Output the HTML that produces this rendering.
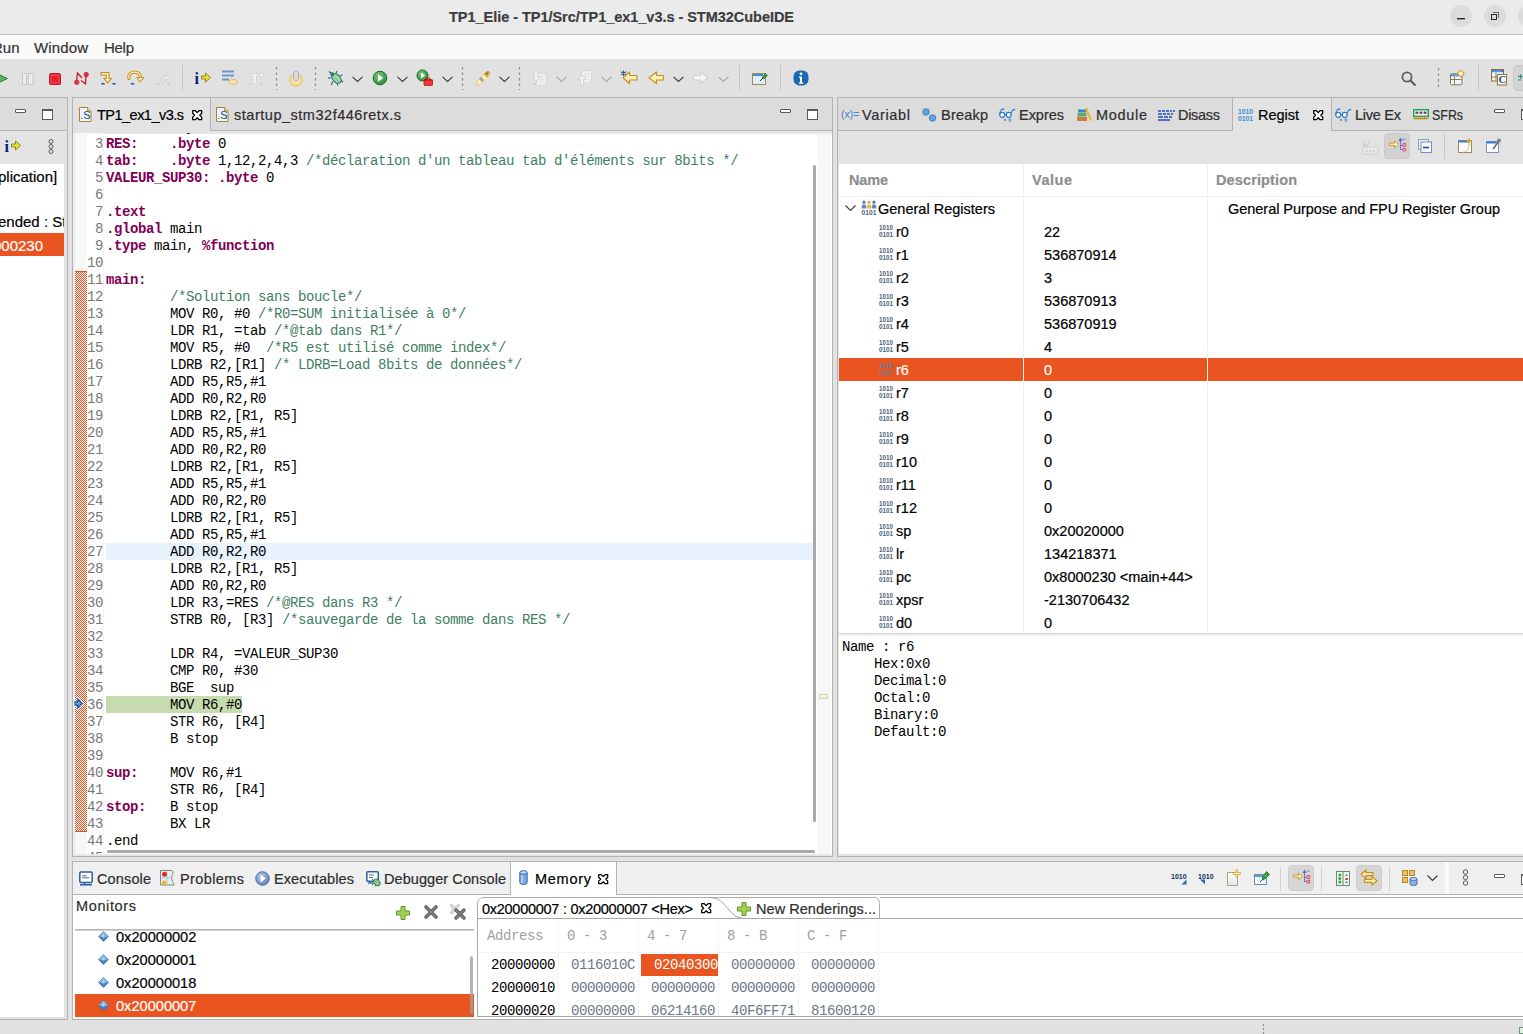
<!DOCTYPE html><html><head><meta charset="utf-8"><style>
*{margin:0;padding:0;box-sizing:border-box}
html,body{width:1523px;height:1034px;overflow:hidden;background:#e1e1e1}
body{position:relative;font-family:"Liberation Sans",sans-serif;font-size:14.5px;color:#1e1e1e}
body div{position:absolute;white-space:pre}
.t{line-height:17px;height:17px;-webkit-text-stroke:0.2px currentColor}
.m{font-family:"Liberation Mono",monospace;font-size:14px;letter-spacing:-0.4px;line-height:17px;height:17px}
.k{color:#7f0055;font-weight:bold}
.c{color:#3f7f5f}
svg{position:absolute;overflow:visible}
span{white-space:pre}
</style></head><body>
<div style="left:0px;top:0px;width:1523px;height:34px;background:#ebebeb"></div>
<div style="left:0px;top:34px;width:1523px;height:1px;background:#bdbdbd"></div>
<div class="t" style="left:449px;top:9px;font-weight:bold;color:#3d3d3d;font-size:14.5px;letter-spacing:-0.034px">TP1_Elie - TP1/Src/TP1_ex1_v3.s - STM32CubeIDE</div>
<div style="left:1450px;top:5px;width:22px;height:22px;background:#dcdcdc;border-radius:50%"></div>
<div style="left:1457px;top:18px;width:8px;height:1px;background:#1e1e1e;box-shadow:0 0.5px 0 #5a5a5a"></div>
<div style="left:1484px;top:5px;width:22px;height:22px;background:#dcdcdc;border-radius:50%"></div>
<div style="left:1491px;top:14px;width:6px;height:6px;border:1.2px solid #2a2a2a"></div>
<div style="left:1493px;top:12px;width:6px;height:6px;border-top:1px solid #6a6a6a;border-right:1px solid #6a6a6a"></div>
<div style="left:1518px;top:5px;width:22px;height:22px;background:#dcdcdc;border-radius:50%"></div>
<div style="left:0px;top:35px;width:1523px;height:24px;background:#fafafa"></div>
<div class="t" style="left:-8px;top:39px;color:#333;font-size:15px">Run</div>
<div class="t" style="left:34px;top:39px;color:#333;font-size:15px;letter-spacing:0.130px">Window</div>
<div class="t" style="left:104px;top:39px;color:#333;font-size:15px;letter-spacing:-0.283px">Help</div>
<div style="left:0px;top:59px;width:1523px;height:38px;background:#e1e1e1"></div>
<div style="left:0px;top:97px;width:68px;height:923px;border-top:1px solid #b3b3b3;border-right:1px solid #b3b3b3;border-bottom:1px solid #b3b3b3;background:#e3e3e3"></div>
<div style="left:0px;top:98px;width:67px;height:32px;background:#dcdcdc"></div>
<div style="left:0px;top:130px;width:67px;height:1px;background:#b3b3b3"></div>
<div style="left:15px;top:109px;width:11px;height:4px;border:1.5px solid #5a5a5a;background:#fff;border-radius:1px"></div><div style="left:42px;top:109px;width:11px;height:11px;border:1.5px solid #5a5a5a;border-top-width:2.5px;background:#fff"></div>
<div style="left:0px;top:164px;width:64px;height:853px;background:#fff"></div>
<div style="left:72px;top:97px;width:761px;height:760px;border:1px solid #b3b3b3;background:#e6e6e6"></div>
<div style="left:73px;top:98px;width:759px;height:32px;background:#dcdcdc"></div>
<div style="left:73px;top:98px;width:137px;height:35px;background:#e3e3e3"></div>
<div style="left:210px;top:98px;width:1px;height:33px;background:#b3b3b3"></div>
<div style="left:211px;top:130px;width:621px;height:1px;background:#b3b3b3"></div>
<div style="left:780px;top:109px;width:11px;height:4px;border:1.5px solid #5a5a5a;background:#fff;border-radius:1px"></div><div style="left:807px;top:109px;width:11px;height:11px;border:1.5px solid #5a5a5a;border-top-width:2.5px;background:#fff"></div>
<div style="left:73px;top:134px;width:759px;height:720px;background:#fff"></div>
<div style="left:73px;top:134px;width:2px;height:720px;background:#ececec"></div>
<div style="left:75px;top:133px;width:29px;height:1px;background:#f8f8f8"></div>
<div style="left:75px;top:134px;width:12px;height:720px;background:#f7f7f7"></div>
<div style="left:817px;top:134px;width:14px;height:720px;background:#f7f7f7"></div>
<div style="left:837px;top:97px;width:700px;height:760px;border:1px solid #b3b3b3;background:#e3e3e3"></div>
<div style="left:838px;top:98px;width:700px;height:32px;background:#dcdcdc"></div>
<div style="left:838px;top:130px;width:394px;height:1px;background:#b3b3b3"></div>
<div style="left:1232px;top:98px;width:1px;height:33px;background:#b3b3b3"></div>
<div style="left:1233px;top:98px;width:98px;height:33px;background:#e3e3e3"></div>
<div style="left:1331px;top:98px;width:1px;height:33px;background:#b3b3b3"></div>
<div style="left:1332px;top:130px;width:200px;height:1px;background:#b3b3b3"></div>
<div style="left:839px;top:164px;width:690px;height:690px;background:#fff"></div>
<div style="left:72px;top:861px;width:1460px;height:159px;border:1px solid #b3b3b3;background:#fff"></div>
<div style="left:73px;top:862px;width:1460px;height:32px;background:#efefef"></div>
<div style="left:73px;top:894px;width:437px;height:1px;background:#b3b3b3"></div>
<div style="left:510px;top:862px;width:1px;height:33px;background:#b3b3b3"></div>
<div style="left:511px;top:862px;width:105px;height:33px;background:#fff"></div>
<div style="left:616px;top:862px;width:1px;height:33px;background:#b3b3b3"></div>
<div style="left:617px;top:894px;width:910px;height:1px;background:#b3b3b3"></div>
<div style="left:0px;top:1020px;width:1523px;height:14px;background:#e1e1e1"></div>
<div style="left:0;top:0;width:1523px;height:1034px;clip-path:inset(133px 691px 180px 73px)"><div style="left:106px;top:543px;width:709px;height:17px;background:#e8f2fe"></div><div style="left:103px;top:134px;width:1px;height:720px;background:#f4f4f4"></div><div style="left:106px;top:696px;width:136px;height:17px;background:#c6dbae"></div><div style="left:75px;top:271px;width:12px;height:561px;background-image:repeating-conic-gradient(#e9501c 0 25%,#fff 0 50%);background-size:2px 2px;border-top:1px solid #e9501c;border-bottom:1px solid #e9501c"></div><div class="m" style="left:87px;top:119px;width:16px;text-align:right;color:#787878">2</div><div class="m" style="left:106px;top:119px;color:#000"><span class="k">SUM:</span>    <span class="k">.byte</span> 0</div><div class="m" style="left:87px;top:136px;width:16px;text-align:right;color:#787878">3</div><div class="m" style="left:106px;top:136px;color:#000"><span class="k">RES:</span>    <span class="k">.byte</span> 0</div><div class="m" style="left:87px;top:153px;width:16px;text-align:right;color:#787878">4</div><div class="m" style="left:106px;top:153px;color:#000"><span class="k">tab:</span>    <span class="k">.byte</span> 1,12,2,4,3 <span class="c">/*déclaration d'un tableau tab d'éléments sur 8bits */</span></div><div class="m" style="left:87px;top:170px;width:16px;text-align:right;color:#787878">5</div><div class="m" style="left:106px;top:170px;color:#000"><span class="k">VALEUR_SUP30:</span> <span class="k">.byte</span> 0</div><div class="m" style="left:87px;top:187px;width:16px;text-align:right;color:#787878">6</div><div class="m" style="left:87px;top:204px;width:16px;text-align:right;color:#787878">7</div><div class="m" style="left:106px;top:204px;color:#000"><span class="k">.text</span></div><div class="m" style="left:87px;top:221px;width:16px;text-align:right;color:#787878">8</div><div class="m" style="left:106px;top:221px;color:#000"><span class="k">.global</span> main</div><div class="m" style="left:87px;top:238px;width:16px;text-align:right;color:#787878">9</div><div class="m" style="left:106px;top:238px;color:#000"><span class="k">.type</span> main, <span class="k">%function</span></div><div class="m" style="left:87px;top:255px;width:16px;text-align:right;color:#787878">10</div><div class="m" style="left:87px;top:272px;width:16px;text-align:right;color:#787878">11</div><div class="m" style="left:106px;top:272px;color:#000"><span class="k">main:</span></div><div class="m" style="left:87px;top:289px;width:16px;text-align:right;color:#787878">12</div><div class="m" style="left:106px;top:289px;color:#000">        <span class="c">/*Solution sans boucle*/</span></div><div class="m" style="left:87px;top:306px;width:16px;text-align:right;color:#787878">13</div><div class="m" style="left:106px;top:306px;color:#000">        MOV R0, #0 <span class="c">/*R0=SUM initialisée à 0*/</span></div><div class="m" style="left:87px;top:323px;width:16px;text-align:right;color:#787878">14</div><div class="m" style="left:106px;top:323px;color:#000">        LDR R1, =tab <span class="c">/*@tab dans R1*/</span></div><div class="m" style="left:87px;top:340px;width:16px;text-align:right;color:#787878">15</div><div class="m" style="left:106px;top:340px;color:#000">        MOV R5, #0  <span class="c">/*R5 est utilisé comme index*/</span></div><div class="m" style="left:87px;top:357px;width:16px;text-align:right;color:#787878">16</div><div class="m" style="left:106px;top:357px;color:#000">        LDRB R2,[R1] <span class="c">/* LDRB=Load 8bits de données*/</span></div><div class="m" style="left:87px;top:374px;width:16px;text-align:right;color:#787878">17</div><div class="m" style="left:106px;top:374px;color:#000">        ADD R5,R5,#1</div><div class="m" style="left:87px;top:391px;width:16px;text-align:right;color:#787878">18</div><div class="m" style="left:106px;top:391px;color:#000">        ADD R0,R2,R0</div><div class="m" style="left:87px;top:408px;width:16px;text-align:right;color:#787878">19</div><div class="m" style="left:106px;top:408px;color:#000">        LDRB R2,[R1, R5]</div><div class="m" style="left:87px;top:425px;width:16px;text-align:right;color:#787878">20</div><div class="m" style="left:106px;top:425px;color:#000">        ADD R5,R5,#1</div><div class="m" style="left:87px;top:442px;width:16px;text-align:right;color:#787878">21</div><div class="m" style="left:106px;top:442px;color:#000">        ADD R0,R2,R0</div><div class="m" style="left:87px;top:459px;width:16px;text-align:right;color:#787878">22</div><div class="m" style="left:106px;top:459px;color:#000">        LDRB R2,[R1, R5]</div><div class="m" style="left:87px;top:476px;width:16px;text-align:right;color:#787878">23</div><div class="m" style="left:106px;top:476px;color:#000">        ADD R5,R5,#1</div><div class="m" style="left:87px;top:493px;width:16px;text-align:right;color:#787878">24</div><div class="m" style="left:106px;top:493px;color:#000">        ADD R0,R2,R0</div><div class="m" style="left:87px;top:510px;width:16px;text-align:right;color:#787878">25</div><div class="m" style="left:106px;top:510px;color:#000">        LDRB R2,[R1, R5]</div><div class="m" style="left:87px;top:527px;width:16px;text-align:right;color:#787878">26</div><div class="m" style="left:106px;top:527px;color:#000">        ADD R5,R5,#1</div><div class="m" style="left:87px;top:544px;width:16px;text-align:right;color:#787878">27</div><div class="m" style="left:106px;top:544px;color:#000">        ADD R0,R2,R0</div><div class="m" style="left:87px;top:561px;width:16px;text-align:right;color:#787878">28</div><div class="m" style="left:106px;top:561px;color:#000">        LDRB R2,[R1, R5]</div><div class="m" style="left:87px;top:578px;width:16px;text-align:right;color:#787878">29</div><div class="m" style="left:106px;top:578px;color:#000">        ADD R0,R2,R0</div><div class="m" style="left:87px;top:595px;width:16px;text-align:right;color:#787878">30</div><div class="m" style="left:106px;top:595px;color:#000">        LDR R3,=RES <span class="c">/*@RES dans R3 */</span></div><div class="m" style="left:87px;top:612px;width:16px;text-align:right;color:#787878">31</div><div class="m" style="left:106px;top:612px;color:#000">        STRB R0, [R3] <span class="c">/*sauvegarde de la somme dans RES */</span></div><div class="m" style="left:87px;top:629px;width:16px;text-align:right;color:#787878">32</div><div class="m" style="left:87px;top:646px;width:16px;text-align:right;color:#787878">33</div><div class="m" style="left:106px;top:646px;color:#000">        LDR R4, =VALEUR_SUP30</div><div class="m" style="left:87px;top:663px;width:16px;text-align:right;color:#787878">34</div><div class="m" style="left:106px;top:663px;color:#000">        CMP R0, #30</div><div class="m" style="left:87px;top:680px;width:16px;text-align:right;color:#787878">35</div><div class="m" style="left:106px;top:680px;color:#000">        BGE  sup</div><div class="m" style="left:87px;top:697px;width:16px;text-align:right;color:#787878">36</div><div class="m" style="left:106px;top:697px;color:#000">        MOV R6,#0</div><div class="m" style="left:87px;top:714px;width:16px;text-align:right;color:#787878">37</div><div class="m" style="left:106px;top:714px;color:#000">        STR R6, [R4]</div><div class="m" style="left:87px;top:731px;width:16px;text-align:right;color:#787878">38</div><div class="m" style="left:106px;top:731px;color:#000">        B stop</div><div class="m" style="left:87px;top:748px;width:16px;text-align:right;color:#787878">39</div><div class="m" style="left:87px;top:765px;width:16px;text-align:right;color:#787878">40</div><div class="m" style="left:106px;top:765px;color:#000"><span class="k">sup:</span>    MOV R6,#1</div><div class="m" style="left:87px;top:782px;width:16px;text-align:right;color:#787878">41</div><div class="m" style="left:106px;top:782px;color:#000">        STR R6, [R4]</div><div class="m" style="left:87px;top:799px;width:16px;text-align:right;color:#787878">42</div><div class="m" style="left:106px;top:799px;color:#000"><span class="k">stop:</span>   B stop</div><div class="m" style="left:87px;top:816px;width:16px;text-align:right;color:#787878">43</div><div class="m" style="left:106px;top:816px;color:#000">        BX LR</div><div class="m" style="left:87px;top:833px;width:16px;text-align:right;color:#787878">44</div><div class="m" style="left:106px;top:833px;color:#000">.end</div><div class="m" style="left:87px;top:850px;width:16px;text-align:right;color:#787878">45</div><svg style="left:75px;top:698px" width="10" height="12" viewBox="0 0 10 12"><path d="M0 3.8H2.8V1L7.2 5.5 2.8 10V7.2H0z" fill="none" stroke="#fff" stroke-width="2.2" stroke-linejoin="miter"/><path d="M0 3.8H2.8V1L7.2 5.5 2.8 10V7.2H0z" fill="#6aa0d4" stroke="#0e5498" stroke-width="1.2" stroke-linejoin="miter"/></svg></div>
<svg style="left:79px;top:107px" width="13" height="15" viewBox="0 0 13 15"><path d="M0.5 0.5h8l3.5 3.5v10.5h-11.5z" fill="#eef4fc" stroke="#a8862e" stroke-width="1"/><path d="M8.5 0.5v3.5h3.5" fill="#f0d890" stroke="#a8862e" stroke-width="0.8"/><text x="1.2" y="12.3" font-family="Liberation Sans" font-size="11" fill="#23476e">.S</text></svg>
<div class="t" style="left:97px;top:107px;color:#000;font-size:14.5px;letter-spacing:-0.518px">TP1_ex1_v3.s</div>
<svg style="left:192px;top:110px" width="12" height="12" viewBox="0 0 12 12"><path d="M0.7 0.7H3.3L5.2 2.6 7.1 0.7H9.7V3.3L7.8 5.2 9.7 7.1V9.7H7.1L5.2 7.8 3.3 9.7H0.7V7.1L2.6 5.2 0.7 3.3z" fill="#fff" stroke="#000" stroke-width="1.25" stroke-linejoin="round"/></svg>
<svg style="left:216px;top:107px" width="13" height="15" viewBox="0 0 13 15"><path d="M0.5 0.5h8l3.5 3.5v10.5h-11.5z" fill="#eef4fc" stroke="#a8862e" stroke-width="1"/><path d="M8.5 0.5v3.5h3.5" fill="#f0d890" stroke="#a8862e" stroke-width="0.8"/><text x="1.2" y="12.3" font-family="Liberation Sans" font-size="11" fill="#23476e">.S</text></svg>
<div class="t" style="left:234px;top:107px;color:#2e2e2e;font-size:14.5px;letter-spacing:0.520px">startup_stm32f446retx.s</div>
<div style="left:813px;top:165px;width:3px;height:657px;background:#a8a8a8;border-radius:2px"></div>
<div style="left:107px;top:850px;width:708px;height:3px;background:#a8a8a8;border-radius:2px"></div>
<div style="left:819px;top:694px;width:9px;height:5px;border:1px solid #c6dbae;background:#eef5e6"></div>
<svg style="left:841px;top:107px" width="18" height="14" viewBox="0 0 18 14"><text x="0" y="10.5" font-family="Liberation Sans" font-size="10.5" fill="#3d85c6">(x)=</text></svg>
<div class="t" style="left:862px;top:107px;color:#2e2e2e;font-size:14.5px;letter-spacing:0.657px">Variabl</div>
<svg style="left:922px;top:108px" width="15" height="14" viewBox="0 0 15 14"><circle cx="4" cy="4" r="3.3" fill="#5fa4dc" stroke="#3a78b0" stroke-width="0.8"/><circle cx="10.5" cy="10" r="3.3" fill="#5fa4dc" stroke="#3a78b0" stroke-width="0.8"/></svg>
<div class="t" style="left:941px;top:107px;color:#2e2e2e;font-size:14.5px;letter-spacing:0.211px">Breakp</div>
<svg style="left:999px;top:107px" width="17" height="15" viewBox="0 0 17 15"><path d="M0.8 7.5C0.6 4 2.5 1.5 5 2.2M12 7.5C12.2 4.5 13.5 2 16 2.8" fill="none" stroke="#2a7ac8" stroke-width="1.1" stroke-linecap="round"/><circle cx="3.3" cy="7.8" r="2.5" fill="#fff" stroke="#2a7ac8" stroke-width="1.2"/><circle cx="9.7" cy="7.8" r="2.5" fill="#fff" stroke="#2a7ac8" stroke-width="1.2"/><path d="M5.8 7.8H7.2" stroke="#2a7ac8" stroke-width="1"/><path d="M4.8 11.8l2 2M6.8 11.8l-2 2M9.5 12.2h2.8M9.5 14h2.8" stroke="#2a7ac8" stroke-width="0.9"/></svg>
<div class="t" style="left:1019px;top:107px;color:#2e2e2e;font-size:14.5px;letter-spacing:-0.026px">Expres</div>
<svg style="left:1077px;top:108px" width="15" height="13" viewBox="0 0 15 13"><rect x="0" y="9" width="10" height="4" fill="#d07a3a"/><rect x="0.5" y="5" width="9" height="3.5" fill="#5aab6a"/><rect x="1" y="1.5" width="8" height="3" fill="#3a88c8"/><path d="M9 0l5 12.5" stroke="#e8b830" stroke-width="2.2"/></svg>
<div class="t" style="left:1096px;top:107px;color:#2e2e2e;font-size:14.5px;letter-spacing:0.689px">Module</div>
<svg style="left:1158px;top:110px" width="17" height="11" viewBox="0 0 17 11"><path d="M0 1h3M4 1h3M8 1h3M12 1h2M15 1h2M0 4h4M5 4h3M9 4h3M13 4h2M0 7h5M6 7h4M11 7h3M0 10h12" stroke="#2a4ab8" stroke-width="1.6"/></svg>
<div class="t" style="left:1178px;top:107px;color:#2e2e2e;font-size:14.5px;letter-spacing:-0.301px">Disass</div>
<svg style="left:1238px;top:109px" width="15" height="12" viewBox="0 0 15 12"><text x="0" y="5.4" font-family="Liberation Sans" font-size="7.2" font-weight="bold" fill="#3d8fd0" textLength="15" lengthAdjust="spacingAndGlyphs">1010</text><text x="0" y="11.6" font-family="Liberation Sans" font-size="7.2" font-weight="bold" fill="#3d8fd0" textLength="15" lengthAdjust="spacingAndGlyphs">0101</text></svg>
<div class="t" style="left:1258px;top:107px;color:#000;font-size:14.5px;letter-spacing:-0.020px">Regist</div>
<svg style="left:1313px;top:110px" width="12" height="12" viewBox="0 0 12 12"><path d="M0.7 0.7H3.3L5.2 2.6 7.1 0.7H9.7V3.3L7.8 5.2 9.7 7.1V9.7H7.1L5.2 7.8 3.3 9.7H0.7V7.1L2.6 5.2 0.7 3.3z" fill="#fff" stroke="#000" stroke-width="1.25" stroke-linejoin="round"/></svg>
<svg style="left:1335px;top:107px" width="17" height="15" viewBox="0 0 17 15"><path d="M0.8 7.5C0.6 4 2.5 1.5 5 2.2M12 7.5C12.2 4.5 13.5 2 16 2.8" fill="none" stroke="#2a7ac8" stroke-width="1.1" stroke-linecap="round"/><circle cx="3.3" cy="7.8" r="2.5" fill="#fff" stroke="#2a7ac8" stroke-width="1.2"/><circle cx="9.7" cy="7.8" r="2.5" fill="#fff" stroke="#2a7ac8" stroke-width="1.2"/><path d="M5.8 7.8H7.2" stroke="#2a7ac8" stroke-width="1"/><path d="M4.8 11.8l2 2M6.8 11.8l-2 2M9.5 12.2h2.8M9.5 14h2.8" stroke="#2a7ac8" stroke-width="0.9"/></svg>
<div class="t" style="left:1355px;top:107px;color:#2e2e2e;font-size:14.5px;letter-spacing:-0.258px">Live Ex</div>
<svg style="left:1413px;top:109px" width="16" height="11" viewBox="0 0 16 11"><rect x="0.7" y="0.7" width="14.6" height="6.6" fill="#e8f4ec" stroke="#18a068" stroke-width="1.4"/><rect x="2.5" y="2.6" width="2.8" height="2.2" fill="#7a3a5a"/><rect x="6.6" y="2.6" width="2.8" height="2.2" fill="#7a3a5a"/><rect x="10.7" y="2.6" width="2.8" height="2.2" fill="#7a3a5a"/><path d="M0.5 7.5H15.5V9.2L14.5 10.3H1.5L0.5 9.2z" fill="#a88420"/><path d="M2 8.6h0.01M4.1 8.6h0.01M6.2 8.6h0.01M8.3 8.6h0.01M10.4 8.6h0.01M12.5 8.6h0.01M14.2 8.6h0.01" stroke="#fff8d0" stroke-width="1.3" stroke-linecap="round"/></svg>
<div class="t" style="left:1432px;top:107px;color:#2e2e2e;font-size:14.5px;transform:scaleX(0.857);transform-origin:0 0">SFRs</div>
<div style="left:1494px;top:109px;width:11px;height:4px;border:1.5px solid #5a5a5a;background:#fff;border-radius:1px"></div>
<div style="left:1521px;top:109px;width:11px;height:11px;border:1.5px solid #5a5a5a;border-top-width:2.5px;background:#fff"></div>
<div style="left:1384px;top:133px;width:26px;height:26px;background:#d2d2d2;border-radius:4px;border:1px solid #cacaca"></div>
<svg style="left:1362px;top:140px" width="17" height="14" viewBox="0 0 17 14"><path d="M3 1c-2 4 0 7 2 9M1 5h6M7 1c-1 3-3 6-5 8" stroke="#c8c8c8" stroke-width="1" fill="none"/><rect x="1" y="7" width="15" height="7" rx="1" fill="#e8e8e8" stroke="#d0d0d0"/><path d="M4 11h1.5M7.5 11h1.5M11 11h1.5" stroke="#c0c0c0" stroke-width="1.5"/></svg>
<svg style="left:1389px;top:137px" width="18" height="15" viewBox="0 0 18 15"><path d="M0.5 6.2H5.5V3.8L9.5 7.3 5.5 10.8V8.4H0.5z" fill="#fff4c8" stroke="#c89a30" stroke-width="1" stroke-linejoin="round"/><path d="M11.5 3.5V12.5H14M11.5 8.5H14" fill="none" stroke="#5a80c0" stroke-width="1.1"/><path d="M9.3 4L11.5 0.8 13.7 4z" fill="#4a70b0"/><path d="M13.5 2.2h3" stroke="#5a80c0" stroke-width="0.9"/><rect x="14" y="6.6" width="2.8" height="2.8" fill="#f8a0b0" stroke="#e04060" stroke-width="0.7"/><rect x="14" y="11.2" width="2.8" height="2.8" fill="#f8a0b0" stroke="#e04060" stroke-width="0.7"/></svg>
<svg style="left:1418px;top:139px" width="14" height="14" viewBox="0 0 14 14"><rect x="0.5" y="0.5" width="10" height="10" fill="#e8eef8" stroke="#8aa0c0"/><rect x="3" y="3" width="10.5" height="10.5" fill="#f4f8fc" stroke="#7a90b8"/><path d="M5 8.5h6" stroke="#1d4a9a" stroke-width="1.6"/></svg>
<div style="left:1444px;top:133px;width:1px;height:26px;background:#c8c8c8"></div>
<svg style="left:1458px;top:138px" width="15" height="15" viewBox="0 0 15 15"><rect x="0.5" y="2.5" width="13" height="12" fill="#f8fbff" stroke="#a08a50"/><rect x="0.5" y="2.5" width="11" height="2" fill="#3a80d0"/><path d="M11 0.5v5M8.5 3h5" stroke="#e0a020" stroke-width="1.5"/><path d="M5 14c4 0 6-3 6-8" stroke="#e0c060" fill="none"/></svg>
<svg style="left:1486px;top:138px" width="15" height="15" viewBox="0 0 15 15"><rect x="0.5" y="3.5" width="12" height="11" fill="#f8fbff" stroke="#8090b0"/><rect x="0.5" y="3.5" width="10" height="2" fill="#3a80d0"/><path d="M7 11l6-8" stroke="#606060" stroke-width="1.4"/><circle cx="13" cy="2.5" r="2" fill="#808080"/></svg>
<div style="left:1023px;top:164px;width:1px;height:469px;background:#f0f0f0"></div>
<div style="left:1207px;top:164px;width:1px;height:469px;background:#f0f0f0"></div>
<div style="left:839px;top:196px;width:700px;height:1px;background:#f0f0f0"></div>
<div class="t" style="left:849px;top:172px;color:#8e8e8e;font-weight:bold;font-size:14.5px;letter-spacing:-0.164px">Name</div>
<div class="t" style="left:1032px;top:172px;color:#8e8e8e;font-weight:bold;font-size:14.5px;letter-spacing:0.529px">Value</div>
<div class="t" style="left:1216px;top:172px;color:#8e8e8e;font-weight:bold;font-size:14.5px;letter-spacing:0.124px">Description</div>
<svg style="left:845px;top:205px" width="11" height="7" viewBox="0 0 11 7"><path d="M0.5 0.5l5 5 5-5" fill="none" stroke="#3c3c3c" stroke-width="1.2"/></svg>
<svg style="left:861px;top:200px" width="16" height="16" viewBox="0 0 16 16"><circle cx="3" cy="2.2" r="1.6" fill="#5a7ab0"/><circle cx="8" cy="2.2" r="1.6" fill="#d8b040"/><circle cx="13" cy="2.2" r="1.6" fill="#5a7ab0"/><path d="M0.8 8.5V6.2a2.2 2 0 0 1 4.4 0V8.5z" fill="#6a88c0"/><path d="M10.8 8.5V6.2a2.2 2 0 0 1 4.4 0V8.5z" fill="#6a88c0"/><path d="M5.8 8.5V6.2a2.2 2 0 0 1 4.4 0V8.5z" fill="#e0c050"/><text x="0.5" y="15" font-family="Liberation Sans" font-size="6.5" font-weight="bold" fill="#4a5f78" textLength="15" lengthAdjust="spacingAndGlyphs">0101</text></svg>
<div class="t" style="left:878px;top:201px;color:#000;font-size:14.5px;letter-spacing:0.009px">General Registers</div>
<div class="t" style="left:1228px;top:201px;color:#000;font-size:14.5px;letter-spacing:-0.033px">General Purpose and FPU Register Group</div>
<svg style="left:879px;top:225px" width="14" height="12" viewBox="0 0 14 12"><text x="0" y="5.4" font-family="Liberation Sans" font-size="7.2" font-weight="bold" fill="#4a5f78" textLength="14" lengthAdjust="spacingAndGlyphs">1010</text><text x="0" y="11.6" font-family="Liberation Sans" font-size="7.2" font-weight="bold" fill="#4a5f78" textLength="14" lengthAdjust="spacingAndGlyphs">0101</text></svg>
<div class="t" style="left:896px;top:224px;color:#000;font-size:14.5px">r0</div>
<div class="t" style="left:1044px;top:224px;color:#000;font-size:14.5px">22</div>
<svg style="left:879px;top:248px" width="14" height="12" viewBox="0 0 14 12"><text x="0" y="5.4" font-family="Liberation Sans" font-size="7.2" font-weight="bold" fill="#4a5f78" textLength="14" lengthAdjust="spacingAndGlyphs">1010</text><text x="0" y="11.6" font-family="Liberation Sans" font-size="7.2" font-weight="bold" fill="#4a5f78" textLength="14" lengthAdjust="spacingAndGlyphs">0101</text></svg>
<div class="t" style="left:896px;top:247px;color:#000;font-size:14.5px">r1</div>
<div class="t" style="left:1044px;top:247px;color:#000;font-size:14.5px">536870914</div>
<svg style="left:879px;top:271px" width="14" height="12" viewBox="0 0 14 12"><text x="0" y="5.4" font-family="Liberation Sans" font-size="7.2" font-weight="bold" fill="#4a5f78" textLength="14" lengthAdjust="spacingAndGlyphs">1010</text><text x="0" y="11.6" font-family="Liberation Sans" font-size="7.2" font-weight="bold" fill="#4a5f78" textLength="14" lengthAdjust="spacingAndGlyphs">0101</text></svg>
<div class="t" style="left:896px;top:270px;color:#000;font-size:14.5px">r2</div>
<div class="t" style="left:1044px;top:270px;color:#000;font-size:14.5px">3</div>
<svg style="left:879px;top:294px" width="14" height="12" viewBox="0 0 14 12"><text x="0" y="5.4" font-family="Liberation Sans" font-size="7.2" font-weight="bold" fill="#4a5f78" textLength="14" lengthAdjust="spacingAndGlyphs">1010</text><text x="0" y="11.6" font-family="Liberation Sans" font-size="7.2" font-weight="bold" fill="#4a5f78" textLength="14" lengthAdjust="spacingAndGlyphs">0101</text></svg>
<div class="t" style="left:896px;top:293px;color:#000;font-size:14.5px">r3</div>
<div class="t" style="left:1044px;top:293px;color:#000;font-size:14.5px">536870913</div>
<svg style="left:879px;top:317px" width="14" height="12" viewBox="0 0 14 12"><text x="0" y="5.4" font-family="Liberation Sans" font-size="7.2" font-weight="bold" fill="#4a5f78" textLength="14" lengthAdjust="spacingAndGlyphs">1010</text><text x="0" y="11.6" font-family="Liberation Sans" font-size="7.2" font-weight="bold" fill="#4a5f78" textLength="14" lengthAdjust="spacingAndGlyphs">0101</text></svg>
<div class="t" style="left:896px;top:316px;color:#000;font-size:14.5px">r4</div>
<div class="t" style="left:1044px;top:316px;color:#000;font-size:14.5px">536870919</div>
<svg style="left:879px;top:340px" width="14" height="12" viewBox="0 0 14 12"><text x="0" y="5.4" font-family="Liberation Sans" font-size="7.2" font-weight="bold" fill="#4a5f78" textLength="14" lengthAdjust="spacingAndGlyphs">1010</text><text x="0" y="11.6" font-family="Liberation Sans" font-size="7.2" font-weight="bold" fill="#4a5f78" textLength="14" lengthAdjust="spacingAndGlyphs">0101</text></svg>
<div class="t" style="left:896px;top:339px;color:#000;font-size:14.5px">r5</div>
<div class="t" style="left:1044px;top:339px;color:#000;font-size:14.5px">4</div>
<div style="left:839px;top:358px;width:700px;height:23px;background:#e95420"></div>
<div style="left:1023px;top:358px;width:1px;height:23px;background:#f5f5f5"></div>
<div style="left:1207px;top:358px;width:1px;height:23px;background:#f5f5f5"></div>
<svg style="left:879px;top:363px" width="14" height="12" viewBox="0 0 14 12"><text x="0" y="5.4" font-family="Liberation Sans" font-size="7.2" font-weight="bold" fill="#6a7f98" textLength="14" lengthAdjust="spacingAndGlyphs">1010</text><text x="0" y="11.6" font-family="Liberation Sans" font-size="7.2" font-weight="bold" fill="#6a7f98" textLength="14" lengthAdjust="spacingAndGlyphs">0101</text></svg>
<div class="t" style="left:896px;top:362px;color:#fff;font-size:14.5px">r6</div>
<div class="t" style="left:1044px;top:362px;color:#fff;font-size:14.5px">0</div>
<svg style="left:879px;top:386px" width="14" height="12" viewBox="0 0 14 12"><text x="0" y="5.4" font-family="Liberation Sans" font-size="7.2" font-weight="bold" fill="#4a5f78" textLength="14" lengthAdjust="spacingAndGlyphs">1010</text><text x="0" y="11.6" font-family="Liberation Sans" font-size="7.2" font-weight="bold" fill="#4a5f78" textLength="14" lengthAdjust="spacingAndGlyphs">0101</text></svg>
<div class="t" style="left:896px;top:385px;color:#000;font-size:14.5px">r7</div>
<div class="t" style="left:1044px;top:385px;color:#000;font-size:14.5px">0</div>
<svg style="left:879px;top:409px" width="14" height="12" viewBox="0 0 14 12"><text x="0" y="5.4" font-family="Liberation Sans" font-size="7.2" font-weight="bold" fill="#4a5f78" textLength="14" lengthAdjust="spacingAndGlyphs">1010</text><text x="0" y="11.6" font-family="Liberation Sans" font-size="7.2" font-weight="bold" fill="#4a5f78" textLength="14" lengthAdjust="spacingAndGlyphs">0101</text></svg>
<div class="t" style="left:896px;top:408px;color:#000;font-size:14.5px">r8</div>
<div class="t" style="left:1044px;top:408px;color:#000;font-size:14.5px">0</div>
<svg style="left:879px;top:432px" width="14" height="12" viewBox="0 0 14 12"><text x="0" y="5.4" font-family="Liberation Sans" font-size="7.2" font-weight="bold" fill="#4a5f78" textLength="14" lengthAdjust="spacingAndGlyphs">1010</text><text x="0" y="11.6" font-family="Liberation Sans" font-size="7.2" font-weight="bold" fill="#4a5f78" textLength="14" lengthAdjust="spacingAndGlyphs">0101</text></svg>
<div class="t" style="left:896px;top:431px;color:#000;font-size:14.5px">r9</div>
<div class="t" style="left:1044px;top:431px;color:#000;font-size:14.5px">0</div>
<svg style="left:879px;top:455px" width="14" height="12" viewBox="0 0 14 12"><text x="0" y="5.4" font-family="Liberation Sans" font-size="7.2" font-weight="bold" fill="#4a5f78" textLength="14" lengthAdjust="spacingAndGlyphs">1010</text><text x="0" y="11.6" font-family="Liberation Sans" font-size="7.2" font-weight="bold" fill="#4a5f78" textLength="14" lengthAdjust="spacingAndGlyphs">0101</text></svg>
<div class="t" style="left:896px;top:454px;color:#000;font-size:14.5px">r10</div>
<div class="t" style="left:1044px;top:454px;color:#000;font-size:14.5px">0</div>
<svg style="left:879px;top:478px" width="14" height="12" viewBox="0 0 14 12"><text x="0" y="5.4" font-family="Liberation Sans" font-size="7.2" font-weight="bold" fill="#4a5f78" textLength="14" lengthAdjust="spacingAndGlyphs">1010</text><text x="0" y="11.6" font-family="Liberation Sans" font-size="7.2" font-weight="bold" fill="#4a5f78" textLength="14" lengthAdjust="spacingAndGlyphs">0101</text></svg>
<div class="t" style="left:896px;top:477px;color:#000;font-size:14.5px">r11</div>
<div class="t" style="left:1044px;top:477px;color:#000;font-size:14.5px">0</div>
<svg style="left:879px;top:501px" width="14" height="12" viewBox="0 0 14 12"><text x="0" y="5.4" font-family="Liberation Sans" font-size="7.2" font-weight="bold" fill="#4a5f78" textLength="14" lengthAdjust="spacingAndGlyphs">1010</text><text x="0" y="11.6" font-family="Liberation Sans" font-size="7.2" font-weight="bold" fill="#4a5f78" textLength="14" lengthAdjust="spacingAndGlyphs">0101</text></svg>
<div class="t" style="left:896px;top:500px;color:#000;font-size:14.5px">r12</div>
<div class="t" style="left:1044px;top:500px;color:#000;font-size:14.5px">0</div>
<svg style="left:879px;top:524px" width="14" height="12" viewBox="0 0 14 12"><text x="0" y="5.4" font-family="Liberation Sans" font-size="7.2" font-weight="bold" fill="#4a5f78" textLength="14" lengthAdjust="spacingAndGlyphs">1010</text><text x="0" y="11.6" font-family="Liberation Sans" font-size="7.2" font-weight="bold" fill="#4a5f78" textLength="14" lengthAdjust="spacingAndGlyphs">0101</text></svg>
<div class="t" style="left:896px;top:523px;color:#000;font-size:14.5px">sp</div>
<div class="t" style="left:1044px;top:523px;color:#000;font-size:14.5px">0x20020000</div>
<svg style="left:879px;top:547px" width="14" height="12" viewBox="0 0 14 12"><text x="0" y="5.4" font-family="Liberation Sans" font-size="7.2" font-weight="bold" fill="#4a5f78" textLength="14" lengthAdjust="spacingAndGlyphs">1010</text><text x="0" y="11.6" font-family="Liberation Sans" font-size="7.2" font-weight="bold" fill="#4a5f78" textLength="14" lengthAdjust="spacingAndGlyphs">0101</text></svg>
<div class="t" style="left:896px;top:546px;color:#000;font-size:14.5px">lr</div>
<div class="t" style="left:1044px;top:546px;color:#000;font-size:14.5px">134218371</div>
<svg style="left:879px;top:570px" width="14" height="12" viewBox="0 0 14 12"><text x="0" y="5.4" font-family="Liberation Sans" font-size="7.2" font-weight="bold" fill="#4a5f78" textLength="14" lengthAdjust="spacingAndGlyphs">1010</text><text x="0" y="11.6" font-family="Liberation Sans" font-size="7.2" font-weight="bold" fill="#4a5f78" textLength="14" lengthAdjust="spacingAndGlyphs">0101</text></svg>
<div class="t" style="left:896px;top:569px;color:#000;font-size:14.5px">pc</div>
<div class="t" style="left:1044px;top:569px;color:#000;font-size:14.5px">0x8000230 &lt;main+44&gt;</div>
<svg style="left:879px;top:593px" width="14" height="12" viewBox="0 0 14 12"><text x="0" y="5.4" font-family="Liberation Sans" font-size="7.2" font-weight="bold" fill="#4a5f78" textLength="14" lengthAdjust="spacingAndGlyphs">1010</text><text x="0" y="11.6" font-family="Liberation Sans" font-size="7.2" font-weight="bold" fill="#4a5f78" textLength="14" lengthAdjust="spacingAndGlyphs">0101</text></svg>
<div class="t" style="left:896px;top:592px;color:#000;font-size:14.5px">xpsr</div>
<div class="t" style="left:1044px;top:592px;color:#000;font-size:14.5px">-2130706432</div>
<svg style="left:879px;top:616px" width="14" height="12" viewBox="0 0 14 12"><text x="0" y="5.4" font-family="Liberation Sans" font-size="7.2" font-weight="bold" fill="#4a5f78" textLength="14" lengthAdjust="spacingAndGlyphs">1010</text><text x="0" y="11.6" font-family="Liberation Sans" font-size="7.2" font-weight="bold" fill="#4a5f78" textLength="14" lengthAdjust="spacingAndGlyphs">0101</text></svg>
<div class="t" style="left:896px;top:615px;color:#000;font-size:14.5px">d0</div>
<div class="t" style="left:1044px;top:615px;color:#000;font-size:14.5px">0</div>
<div style="left:839px;top:633px;width:700px;height:1px;background:#d4d4d4"></div>
<div style="left:839px;top:634px;width:700px;height:2px;background:#efefef"></div>
<div class="m" style="left:842px;top:639px;color:#000">Name : r6</div>
<div class="m" style="left:842px;top:656px;color:#000">    Hex:0x0</div>
<div class="m" style="left:842px;top:673px;color:#000">    Decimal:0</div>
<div class="m" style="left:842px;top:690px;color:#000">    Octal:0</div>
<div class="m" style="left:842px;top:707px;color:#000">    Binary:0</div>
<div class="m" style="left:842px;top:724px;color:#000">    Default:0</div>
<svg style="left:79px;top:871px" width="14" height="15" viewBox="0 0 14 15"><rect x="0.8" y="1" width="12.4" height="10.5" rx="1.2" fill="#fff" stroke="#2d5ba0" stroke-width="1.5"/><path d="M3.2 4.8h4.5M3.2 6.8h7" stroke="#3a5a98" stroke-width="0.9"/><path d="M5.5 12v1.2M1 13.8h12" stroke="#2d5ba0" stroke-width="1.4"/></svg>
<div class="t" style="left:97px;top:871px;color:#2e2e2e;font-size:14.5px;letter-spacing:0.133px">Console</div>
<svg style="left:160px;top:870px" width="15" height="16" viewBox="0 0 15 16"><path d="M0.5 0.5h11.5c1 1 1.5 2 0.5 4s-1 5 0 7 2 3 1.5 3.5H0.5z" fill="#e4eef8" stroke="#7a7a60" stroke-width="0.9"/><path d="M7 1v14M1 8h11" stroke="#a8c0d8" stroke-width="0.8"/><circle cx="4.5" cy="4.3" r="2.5" fill="#e02828"/><path d="M2 14.5v-2.5l2.2-2 2.3 2v2.5z" fill="#f0b020"/></svg>
<div class="t" style="left:180px;top:871px;color:#2e2e2e;font-size:14.5px;letter-spacing:0.394px">Problems</div>
<svg style="left:255px;top:871px" width="15" height="15" viewBox="0 0 15 15"><defs><radialGradient id="gb1" cx="0.4" cy="0.35" r="0.7"><stop offset="0" stop-color="#b8cce8"/><stop offset="1" stop-color="#5a7ab8"/></radialGradient></defs><circle cx="7.5" cy="7.5" r="6.8" fill="url(#gb1)" stroke="#4a6aa8" stroke-width="0.9"/><path d="M5.5 3.5l5.2 4-5.2 4z" fill="#fff"/></svg>
<div class="t" style="left:274px;top:871px;color:#2e2e2e;font-size:14.5px;letter-spacing:0.101px">Executables</div>
<svg style="left:366px;top:871px" width="15" height="16" viewBox="0 0 15 16"><rect x="0.8" y="0.8" width="11.5" height="9.5" rx="1" fill="#fff" stroke="#2d5ba0" stroke-width="1.5"/><path d="M3 4h5M3 6.5h4" stroke="#3a5a98" stroke-width="0.9"/><path d="M2 12h5" stroke="#2d5ba0" stroke-width="1.3"/><path d="M6 8l2 2M6 14l2-1.5M9 15.5l1-2" stroke="#1e5a3a" stroke-width="0.8"/><ellipse cx="11" cy="11.5" rx="2.8" ry="3.8" transform="rotate(-40 11 11.5)" fill="#8ac88a" stroke="#2a6a4a" stroke-width="0.8"/></svg>
<div class="t" style="left:384px;top:871px;color:#2e2e2e;font-size:14.5px;letter-spacing:0.072px">Debugger Console</div>
<svg style="left:519px;top:870px" width="9" height="15" viewBox="0 0 9 15"><path d="M0.8 2.5v10a3.7 2 0 0 0 7.4 0v-10" fill="#7aa8e0" stroke="#3a6ab0" stroke-width="1"/><ellipse cx="4.5" cy="2.5" rx="3.7" ry="1.8" fill="#b8d4f4" stroke="#3a6ab0" stroke-width="1"/><path d="M3 5v8" stroke="#d8e8fa" stroke-width="1.2"/></svg>
<div class="t" style="left:535px;top:871px;color:#000;font-size:14.5px;letter-spacing:0.727px">Memory</div>
<svg style="left:598px;top:874px" width="12" height="12" viewBox="0 0 12 12"><path d="M0.7 0.7H3.3L5.2 2.6 7.1 0.7H9.7V3.3L7.8 5.2 9.7 7.1V9.7H7.1L5.2 7.8 3.3 9.7H0.7V7.1L2.6 5.2 0.7 3.3z" fill="#fff" stroke="#000" stroke-width="1.25" stroke-linejoin="round"/></svg>
<svg style="left:1171px;top:871px" width="17" height="15" viewBox="0 0 17 15"><text x="0" y="7.5" font-family="Liberation Sans" font-size="8" font-weight="bold" fill="#14305a" textLength="15.5" lengthAdjust="spacingAndGlyphs">1010</text><path d="M10.5 13.5L15.5 8.5V13.5z" fill="#2f6aa8"/></svg>
<svg style="left:1198px;top:871px" width="17" height="15" viewBox="0 0 17 15"><text x="0" y="7.5" font-family="Liberation Sans" font-size="8" font-weight="bold" fill="#14305a" textLength="15.5" lengthAdjust="spacingAndGlyphs">1010</text><path d="M2 8.5H7V13.5z" fill="#2f6aa8"/></svg>
<svg style="left:1227px;top:870px" width="16" height="16" viewBox="0 0 16 16"><defs><linearGradient id="gd1" x1="0" y1="0" x2="0" y2="1"><stop offset="0" stop-color="#ffffff"/><stop offset="1" stop-color="#dce8f6"/></linearGradient></defs><path d="M0.5 2.5H8.5L10.5 4.5V15.5H0.5z" fill="url(#gd1)" stroke="#b8a060" stroke-width="1"/><path d="M9.8 0.5v6M6.8 3.5h6" stroke="#c8a030" stroke-width="2.6" stroke-linecap="round"/><path d="M9.8 0.5v6M6.8 3.5h6" stroke="#fff0b0" stroke-width="1.1" stroke-linecap="round"/></svg>
<svg style="left:1254px;top:870px" width="16" height="15" viewBox="0 0 16 15"><rect x="0.5" y="4.5" width="12" height="10" fill="#eef6fc" stroke="#7a8aa0"/><rect x="1" y="5" width="11" height="2" fill="#5a9ad8"/><path d="M6 12L9 9" stroke="#404040" stroke-width="1"/><path d="M8 8.5L12.5 1.5 15.5 4.5 9.5 10z" fill="#28a038" stroke="#187028" stroke-width="0.8" stroke-linejoin="round"/><path d="M10.5 5.5l2.5 1" stroke="#80d080" stroke-width="0.8"/></svg>
<div style="left:1280px;top:867px;width:1px;height:24px;background:#cfcfcf"></div>
<div style="left:1288px;top:865px;width:26px;height:26px;background:#d6d6d6;border-radius:4px;border:1px solid #cdcdcd"></div>
<svg style="left:1293px;top:869px" width="18" height="15" viewBox="0 0 18 15"><path d="M0.5 6.2H5.5V3.8L9.5 7.3 5.5 10.8V8.4H0.5z" fill="#fff4c8" stroke="#c89a30" stroke-width="1" stroke-linejoin="round"/><path d="M11.5 3.5V12.5H14M11.5 8.5H14" fill="none" stroke="#5a80c0" stroke-width="1.1"/><path d="M9.3 4L11.5 0.8 13.7 4z" fill="#4a70b0"/><path d="M13.5 2.2h3" stroke="#5a80c0" stroke-width="0.9"/><rect x="14" y="6.6" width="2.8" height="2.8" fill="#f8a0b0" stroke="#e04060" stroke-width="0.7"/><rect x="14" y="11.2" width="2.8" height="2.8" fill="#f8a0b0" stroke="#e04060" stroke-width="0.7"/></svg>
<div style="left:1321px;top:867px;width:1px;height:24px;background:#cfcfcf"></div>
<svg style="left:1336px;top:871px" width="14" height="15" viewBox="0 0 14 15"><rect x="0.5" y="0.5" width="13" height="14" fill="#f0f6ec" stroke="#6a8a6a"/><path d="M7 1v13" stroke="#6a8a6a"/><circle cx="3.8" cy="4" r="1.5" fill="#30a050"/><circle cx="3.8" cy="7.5" r="1.5" fill="#30a050"/><circle cx="3.8" cy="11" r="1.5" fill="#30a050"/><path d="M9 5l1.5-2 1.5 2zM9.5 7h2.5v2h-2.5zM9 12l1.5-2 1.5 2z" fill="#4a80d0"/><rect x="9.5" y="7" width="2.5" height="2" fill="#e04040"/></svg>
<div style="left:1356px;top:865px;width:26px;height:26px;background:#d6d6d6;border-radius:4px;border:1px solid #cdcdcd"></div>
<svg style="left:1360px;top:869px" width="18" height="17" viewBox="0 0 18 17"><path d="M1 5.2L6 1V3.7H13V6.7H6V9.4z" fill="#fff0b8" stroke="#c8901a" stroke-width="1.2" stroke-linejoin="round"/><path d="M17 11.8L12 7.6V10.3H4.5V13.3H12V16z" fill="#fff0b8" stroke="#c8901a" stroke-width="1.2" stroke-linejoin="round"/></svg>
<div style="left:1389px;top:867px;width:1px;height:24px;background:#cfcfcf"></div>
<svg style="left:1402px;top:870px" width="16" height="16" viewBox="0 0 16 16"><rect x="0.5" y="0.5" width="5" height="5" fill="#f0c060" stroke="#b88a30"/><rect x="7.5" y="0.5" width="5" height="5" fill="#f0c060" stroke="#b88a30"/><rect x="0.5" y="7.5" width="5" height="5" fill="#f0c060" stroke="#b88a30"/><path d="M8 9v5a3.5 1.5 0 0 0 7 0v-5" fill="#8ab0e0" stroke="#4a70b0"/><ellipse cx="11.5" cy="9" rx="3.5" ry="1.5" fill="#c0d8f4" stroke="#4a70b0"/></svg>
<svg style="left:1427px;top:875px" width="11" height="7" viewBox="0 0 11 7"><path d="M0.5 0.5l5 5 5-5" fill="none" stroke="#3c3c3c" stroke-width="1.2"/></svg>
<div style="left:1445px;top:862px;width:4px;height:32px;background:#fafafa"></div>
<svg style="left:1462px;top:869px" width="7" height="17" viewBox="0 0 7 17"><circle cx="3.5" cy="3" r="2.2" fill="none" stroke="#5a5a5a" stroke-width="1"/><circle cx="3.5" cy="8.5" r="2.2" fill="none" stroke="#5a5a5a" stroke-width="1"/><circle cx="3.5" cy="14" r="2.2" fill="none" stroke="#5a5a5a" stroke-width="1"/></svg>
<div style="left:1494px;top:874px;width:11px;height:4px;border:1.5px solid #5a5a5a;background:#fff;border-radius:1px"></div>
<div style="left:1521px;top:874px;width:11px;height:11px;border:1.5px solid #5a5a5a;border-top-width:2.5px;background:#fff"></div>
<div class="t" style="left:76px;top:898px;color:#2e2e2e;font-size:14.5px;letter-spacing:0.629px">Monitors</div>
<svg style="left:396px;top:906px" width="14" height="14" viewBox="0 0 14 14"><path d="M5 0.5h4v4.5h4.5v4H9v4.5H5V9H0.5V5H5z" fill="#a8d050" stroke="#5a9a30" stroke-width="1"/></svg>
<svg style="left:424px;top:905px" width="14" height="14" viewBox="0 0 14 14"><path d="M2 2L12 12M12 2L2 12" stroke="#5a5a5a" stroke-width="3.6" stroke-linecap="round"/><path d="M2 2L12 12M12 2L2 12" stroke="#8a8a8a" stroke-width="1.4" stroke-linecap="round"/></svg>
<svg style="left:450px;top:904px" width="16" height="16" viewBox="0 0 16 16"><path d="M1.5 1.5L8.5 8.5M8.5 1.5L1.5 8.5" stroke="#b8b8b8" stroke-width="3" stroke-linecap="round"/><path d="M1.5 1.5L8.5 8.5M8.5 1.5L1.5 8.5" stroke="#e8e8e8" stroke-width="1.2" stroke-linecap="round"/><path d="M6 6L14 14M14 6L6 14" stroke="#5a5a5a" stroke-width="3.4" stroke-linecap="round"/><path d="M6 6L14 14M14 6L6 14" stroke="#8a8a8a" stroke-width="1.2" stroke-linecap="round"/></svg>
<div style="left:0;top:0;width:1523px;height:1034px;clip-path:inset(930px 1049px 17px 73px)"><svg style="left:98px;top:931px" width="11" height="11" viewBox="0 0 11 11"><path d="M5.5 0.5L10.5 5.5 5.5 10.5 0.5 5.5z" fill="#4a88c8" stroke="#2a5a98" stroke-width="0.6"/><path d="M5.5 0.5L10.5 5.5H0.5z" fill="#8ab8e8"/><path d="M5.5 3v4M3.5 5.5h4" stroke="#fff" stroke-width="0.7" opacity="0.6"/></svg><div class="t" style="left:116px;top:929px;color:#000;font-size:14.6px">0x20000002</div><svg style="left:98px;top:954px" width="11" height="11" viewBox="0 0 11 11"><path d="M5.5 0.5L10.5 5.5 5.5 10.5 0.5 5.5z" fill="#4a88c8" stroke="#2a5a98" stroke-width="0.6"/><path d="M5.5 0.5L10.5 5.5H0.5z" fill="#8ab8e8"/><path d="M5.5 3v4M3.5 5.5h4" stroke="#fff" stroke-width="0.7" opacity="0.6"/></svg><div class="t" style="left:116px;top:952px;color:#000;font-size:14.6px">0x20000001</div><svg style="left:98px;top:977px" width="11" height="11" viewBox="0 0 11 11"><path d="M5.5 0.5L10.5 5.5 5.5 10.5 0.5 5.5z" fill="#4a88c8" stroke="#2a5a98" stroke-width="0.6"/><path d="M5.5 0.5L10.5 5.5H0.5z" fill="#8ab8e8"/><path d="M5.5 3v4M3.5 5.5h4" stroke="#fff" stroke-width="0.7" opacity="0.6"/></svg><div class="t" style="left:116px;top:975px;color:#000;font-size:14.6px">0x20000018</div><div style="left:75px;top:994px;width:399px;height:23px;background:#e95420"></div><svg style="left:98px;top:1000px" width="11" height="11" viewBox="0 0 11 11"><path d="M5.5 0.5L10.5 5.5 5.5 10.5 0.5 5.5z" fill="#4a88c8" stroke="#2a5a98" stroke-width="0.6"/><path d="M5.5 0.5L10.5 5.5H0.5z" fill="#8ab8e8"/><path d="M5.5 3v4M3.5 5.5h4" stroke="#fff" stroke-width="0.7" opacity="0.6"/></svg><div class="t" style="left:116px;top:998px;color:#fff;font-size:14.6px">0x20000007</div><div style="left:470px;top:956px;width:3px;height:58px;background:#a0a0a0;border-radius:2px;opacity:0.8"></div></div>
<div style="left:75px;top:929px;width:399px;height:2px;background:linear-gradient(#a8a8a8,#e0e0e0)"></div>
<div style="left:484px;top:897px;width:391px;height:1px;background:#ababab"></div>
<div style="left:880px;top:897px;width:643px;height:1px;background:#ababab"></div>
<div style="left:478px;top:918px;width:1045px;height:1px;background:#a8a8a8"></div>
<div style="left:477px;top:903px;width:1px;height:114px;background:#a8a8a8"></div>
<svg style="left:477px;top:896px" width="410" height="24" viewBox="0 0 410 24"><path d="M0.5 7.5C0.5 4 3 1.5 7 1.5" fill="none" stroke="#ababab" stroke-width="1"/><path d="M232 1.5c8 0 12 3 17 9s10 11.5 16 11.5" fill="none" stroke="#a0a0a0" stroke-width="1"/><path d="M398 1.5c3 0 4.5 2.5 4.5 6V22" fill="none" stroke="#ababab" stroke-width="1"/></svg>
<div class="t" style="left:482px;top:901px;color:#000;font-size:14.5px;letter-spacing:-0.268px">0x20000007 : 0x20000007 &lt;Hex&gt;</div>
<svg style="left:701px;top:903px" width="12" height="12" viewBox="0 0 12 12"><path d="M0.7 0.7H3.3L5.2 2.6 7.1 0.7H9.7V3.3L7.8 5.2 9.7 7.1V9.7H7.1L5.2 7.8 3.3 9.7H0.7V7.1L2.6 5.2 0.7 3.3z" fill="#fff" stroke="#000" stroke-width="1.25" stroke-linejoin="round"/></svg>
<svg style="left:737px;top:902px" width="14" height="14" viewBox="0 0 14 14"><path d="M5 0.5h4v4.5h4.5v4H9v4.5H5V9H0.5V5H5z" fill="#a8d050" stroke="#5a9a30" stroke-width="1"/></svg>
<div class="t" style="left:756px;top:901px;color:#2e2e2e;font-size:14.5px;letter-spacing:0.045px">New Renderings...</div>
<div style="left:558px;top:920px;width:1px;height:96px;background:#f4f4f4"></div>
<div style="left:638px;top:920px;width:1px;height:96px;background:#f4f4f4"></div>
<div style="left:718px;top:920px;width:1px;height:96px;background:#f4f4f4"></div>
<div style="left:798px;top:920px;width:1px;height:96px;background:#f4f4f4"></div>
<div style="left:878px;top:920px;width:1px;height:96px;background:#f4f4f4"></div>
<div style="left:479px;top:952px;width:1044px;height:1px;background:#f4f4f4"></div>
<div class="m" style="left:487px;top:928px;color:#a0a0a0">Address</div>
<div class="m" style="left:567px;top:928px;color:#a0a0a0">0 - 3</div>
<div class="m" style="left:647px;top:928px;color:#a0a0a0">4 - 7</div>
<div class="m" style="left:727px;top:928px;color:#a0a0a0">8 - B</div>
<div class="m" style="left:807px;top:928px;color:#a0a0a0">C - F</div>
<div style="left:0;top:0;width:1523px;height:1034px;clip-path:inset(919px 0 18px 479px)"><div style="left:641px;top:954px;width:77px;height:22px;background:#e95420"></div><div class="m" style="left:491px;top:957px;color:#000">20000000</div><div class="m" style="left:571px;top:957px;color:#6c7888">0116010C</div><div class="m" style="left:654px;top:957px;color:#fff">02040300</div><div class="m" style="left:731px;top:957px;color:#6c7888">00000000</div><div class="m" style="left:811px;top:957px;color:#6c7888">00000000</div><div class="m" style="left:491px;top:980px;color:#000">20000010</div><div class="m" style="left:571px;top:980px;color:#6c7888">00000000</div><div class="m" style="left:651px;top:980px;color:#6c7888">00000000</div><div class="m" style="left:731px;top:980px;color:#6c7888">00000000</div><div class="m" style="left:811px;top:980px;color:#6c7888">00000000</div><div class="m" style="left:491px;top:1003px;color:#000">20000020</div><div class="m" style="left:571px;top:1003px;color:#6c7888">00000000</div><div class="m" style="left:651px;top:1003px;color:#6c7888">06214160</div><div class="m" style="left:731px;top:1003px;color:#6c7888">40F6FF71</div><div class="m" style="left:811px;top:1003px;color:#6c7888">81600120</div></div>
<div style="left:478px;top:1016px;width:1045px;height:1px;background:#a8a8a8"></div>
<svg style="left:5px;top:139px" width="17" height="14" viewBox="0 0 17 14"><text x="-0.5" y="13" font-family="Liberation Serif" font-size="16" font-weight="bold" fill="#0a1a80">i</text><path d="M6.5 5H10.5V2L15.5 6.5 10.5 11V8H6.5z" fill="#e4e430" stroke="#8a7a20" stroke-width="0.9" stroke-linejoin="round"/></svg>
<svg style="left:48px;top:139px" width="6" height="15" viewBox="0 0 6 15"><circle cx="3" cy="2.5" r="2" fill="none" stroke="#5a5a5a" stroke-width="1"/><circle cx="3" cy="7.5" r="2" fill="none" stroke="#5a5a5a" stroke-width="1"/><circle cx="3" cy="12.5" r="2" fill="none" stroke="#5a5a5a" stroke-width="1"/></svg>
<div style="left:0;top:0;width:1523px;height:1034px;clip-path:inset(164px 1459px 17px 0)"><div class="t" style="left:-2px;top:168px;color:#000;font-size:15px">plication]</div><div class="t" style="left:-2px;top:213px;color:#000;font-size:15px">ended : St</div><div style="left:0px;top:233px;width:64px;height:23px;background:#e95420"></div><div class="t" style="left:-7px;top:237px;color:#fff;font-size:15px">000230</div></div>
<svg style="left:1262px;top:1024px" width="3" height="10" viewBox="0 0 3 10"><path d="M1.5 0v10" stroke="#a09070" stroke-width="1.2" stroke-dasharray="2 2"/></svg>
<div style="left:1519px;top:1027px;width:6px;height:7px;border:1px solid #6a9a7a;background:#e0f0e0"></div>
<svg style="left:-6px;top:72px" width="15" height="13" viewBox="0 0 15 13"><path d="M0.5 0.5L13.5 6.5 0.5 12.5z" fill="#5cb060" stroke="#2a8040" stroke-width="1"/></svg><svg style="left:22px;top:73px" width="12" height="12" viewBox="0 0 12 12"><rect x="0.5" y="0.5" width="4" height="11" fill="#ececec" stroke="#c8c8c8"/><rect x="6.5" y="0.5" width="4.5" height="11" fill="#ececec" stroke="#c8c8c8"/></svg><svg style="left:49px;top:73px" width="12" height="12" viewBox="0 0 12 12"><rect x="0.6" y="0.6" width="10.8" height="10.8" rx="1.5" fill="#e8202e" stroke="#c01a28" stroke-width="1.2"/><rect x="2" y="2" width="8" height="8" fill="none" stroke="#f07080" stroke-width="0.6"/></svg><svg style="left:74px;top:72px" width="15" height="13" viewBox="0 0 15 13"><path d="M2.5 10L3.5 1L8 6" fill="none" stroke="#c81a2a" stroke-width="1.3"/><path d="M7 8.5L11.5 12L12 3" fill="none" stroke="#c81a2a" stroke-width="1.3"/><circle cx="2.8" cy="10.3" r="2.3" fill="#e8304a" stroke="#c01a28" stroke-width="0.6"/><circle cx="12.2" cy="2.6" r="2.3" fill="#e8304a" stroke="#c01a28" stroke-width="0.6"/></svg><svg style="left:100px;top:71px" width="17" height="14" viewBox="0 0 17 14"><path d="M1 1.5H9V7.5H11.5L7.7 11.8 3.9 7.5H6.2V4H1z" fill="#fdf0c0" stroke="#c8901a" stroke-width="1.1" stroke-linejoin="round"/><path d="M1 13.5a2 1.7 0 0 1 4 0zM12 13.5a2 1.7 0 0 1 4 0z" fill="#2a5a98"/></svg><svg style="left:126px;top:71px" width="18" height="14" viewBox="0 0 18 14"><path d="M3 7.5C2 2.5 6 1 9 1.2S14.5 3 14.5 7" fill="none" stroke="#c8901a" stroke-width="3.2" stroke-linecap="round"/><path d="M3 7.5C2 2.5 6 1 9 1.2S14.5 3 14.5 7" fill="none" stroke="#fdf0c0" stroke-width="1.2" stroke-linecap="round"/><path d="M10.8 6.5H17.7L14.2 11z" fill="#fdf0c0" stroke="#c8901a" stroke-width="1.1" stroke-linejoin="round"/><path d="M4.5 13.5a2 1.7 0 0 1 4 0z" fill="#2a5a98"/></svg><svg style="left:155px;top:71px" width="16" height="14" viewBox="0 0 16 14"><path d="M6.5 12V6.5H10V3.5L14 6.5 10 9.5V8.5H8.5V12z" fill="#f4f4f4" stroke="#d0d0d0" stroke-width="1" stroke-linejoin="round"/><path d="M0.5 13.5a2 1.5 0 0 1 4 0zM11.5 13.5a2 1.5 0 0 1 4 0z" fill="#c8c8c8"/></svg><div style="left:182px;top:65px;width:1px;height:26px;background:#c6c6c6"></div><svg style="left:195px;top:71px" width="17" height="14" viewBox="0 0 17 14"><text x="-0.5" y="13" font-family="Liberation Serif" font-size="16" font-weight="bold" fill="#0a1a80">i</text><path d="M6.5 5H10.5V2L15.5 6.5 10.5 11V8H6.5z" fill="#e4e430" stroke="#8a7a20" stroke-width="0.9" stroke-linejoin="round"/></svg><svg style="left:222px;top:70px" width="17" height="16" viewBox="0 0 17 16"><path d="M0 1.5h12M0 5.5h12M0 9.5h7" stroke="#6a98c8" stroke-width="2.2"/><path d="M6.5 11.5l3-3 1.5 1.5 2-1 3 3-2 2.5-2-1-2 1.5z" fill="#f8e0a8" stroke="#d8a860" stroke-width="0.8"/></svg><svg style="left:248px;top:70px" width="17" height="16" viewBox="0 0 17 16"><path d="M5 12.5V6H1.5v-2H13V1.5l3 3.5-3 3.5V6H8.5v6.5l-1.5 1.5z" fill="#f4f4f4" stroke="#d4d4d4" stroke-width="1"/><path d="M0.5 14.5a1.8 1.2 0 0 1 3.6 0zM11.5 14.5a1.8 1.2 0 0 1 3.6 0z" fill="#cfcfcf"/></svg><svg style="left:275px;top:67px" width="3" height="23" viewBox="0 0 3 23"><path d="M1.5 0V23" stroke="#9a9070" stroke-width="1.3" stroke-dasharray="2.5 3"/></svg><svg style="left:288px;top:70px" width="16" height="16" viewBox="0 0 16 16"><circle cx="8" cy="10" r="6.5" fill="#f0d888" stroke="#e0c060" stroke-width="1" stroke-dasharray="2 1"/><circle cx="8" cy="10" r="4" fill="#f8e8b0"/><rect x="5.5" y="1" width="5" height="10" rx="2" fill="#d8d8e0" stroke="#a8a8b8" stroke-width="0.8"/></svg><svg style="left:314px;top:67px" width="3" height="23" viewBox="0 0 3 23"><path d="M1.5 0V23" stroke="#9a9070" stroke-width="1.3" stroke-dasharray="2.5 3"/></svg><svg style="left:328px;top:70px" width="16" height="16" viewBox="0 0 16 16"><path d="M4 4L1 1.5M3 8L0 8M5 11.5L3 15M8 3.5L9 1M12 5.5L14.5 5M12.5 10L15 12M9 13L10 15.5" stroke="#1e6a5a" stroke-width="1.1"/><ellipse cx="8.5" cy="8.5" rx="3.6" ry="5.6" transform="rotate(-45 8.5 8.5)" fill="#a8d8a0" stroke="#1e6a7a" stroke-width="1.1"/><path d="M6.5 7.5l4 4" stroke="#6ab070" stroke-width="1"/><circle cx="4.3" cy="4.3" r="1.7" fill="#2a8a8a" stroke="#1e5a6a" stroke-width="0.6"/></svg><svg style="left:352px;top:76px" width="11" height="7" viewBox="0 0 11 7"><path d="M0.5 0.8l5 4.6 5-4.6" fill="none" stroke="#3c3c3c" stroke-width="1.15"/></svg><svg style="left:372px;top:70px" width="16" height="16" viewBox="0 0 16 16"><defs><radialGradient id="gr1" cx="0.4" cy="0.35" r="0.7"><stop offset="0" stop-color="#7cc87a"/><stop offset="1" stop-color="#2a8a3a"/></radialGradient></defs><circle cx="8" cy="8" r="6.8" fill="url(#gr1)" stroke="#1e6a2e" stroke-width="1"/><path d="M6 4.3l5.2 3.7L6 11.7z" fill="#fff"/></svg><svg style="left:397px;top:76px" width="11" height="7" viewBox="0 0 11 7"><path d="M0.5 0.8l5 4.6 5-4.6" fill="none" stroke="#3c3c3c" stroke-width="1.15"/></svg><svg style="left:416px;top:69px" width="18" height="18" viewBox="0 0 18 18"><circle cx="6.5" cy="6.5" r="5.5" fill="url(#gr1)" stroke="#1e6a2e" stroke-width="1"/><path d="M5 3.5l4.3 3-4.3 3z" fill="#fff"/><rect x="8" y="10.5" width="8.5" height="6" rx="0.8" fill="#e01818" stroke="#b80c0c" stroke-width="0.7"/><path d="M10.5 10.5V9h3.5v1.5" stroke="#b80c0c" stroke-width="0.9" fill="none"/><path d="M8.5 13h7.5M8.5 15h7.5" stroke="#ff9090" stroke-width="0.6"/></svg><svg style="left:442px;top:76px" width="11" height="7" viewBox="0 0 11 7"><path d="M0.5 0.8l5 4.6 5-4.6" fill="none" stroke="#3c3c3c" stroke-width="1.15"/></svg><svg style="left:461px;top:67px" width="3" height="23" viewBox="0 0 3 23"><path d="M1.5 0V23" stroke="#9a9070" stroke-width="1.3" stroke-dasharray="2.5 3"/></svg><svg style="left:474px;top:70px" width="17" height="17" viewBox="0 0 17 17"><path d="M1.5 15.5L4 10 11 3 14.5 6.5 7.5 13.5z" fill="#f8f0c0" stroke="#e8c860" stroke-width="0.8"/><path d="M6 8l3 3" stroke="#a0a0a8" stroke-width="3"/><path d="M10 4l4-3 2 2-3 4z" fill="#f0b040" stroke="#c88820" stroke-width="0.8"/><circle cx="13" cy="3.5" r="0.9" fill="#2a5a98"/></svg><svg style="left:499px;top:76px" width="11" height="7" viewBox="0 0 11 7"><path d="M0.5 0.8l5 4.6 5-4.6" fill="none" stroke="#3c3c3c" stroke-width="1.15"/></svg><svg style="left:518px;top:67px" width="3" height="23" viewBox="0 0 3 23"><path d="M1.5 0V23" stroke="#9a9070" stroke-width="1.3" stroke-dasharray="2.5 3"/></svg><svg style="left:532px;top:70px" width="15" height="16" viewBox="0 0 15 16"><rect x="4.5" y="3.5" width="10" height="12" fill="#f0f0f0" stroke="#d8d8d8"/><path d="M6.5 7h6M6.5 9.5h6M6.5 12h6" stroke="#e0e0e0"/><path d="M2.5 0.5h3v6h2.5l-4 4.5-4-4.5h2.5z" fill="#f4f4f4" stroke="#d0d0d0" stroke-width="0.9"/><rect x="1" y="13" width="3" height="2" fill="#d0d0d0"/></svg><svg style="left:556px;top:76px" width="11" height="7" viewBox="0 0 11 7"><path d="M0.5 0.8l5 4.6 5-4.6" fill="none" stroke="#a8a8a8" stroke-width="1.15"/></svg><svg style="left:577px;top:70px" width="15" height="16" viewBox="0 0 15 16"><rect x="4.5" y="0.5" width="10" height="12" fill="#f0f0f0" stroke="#d8d8d8"/><path d="M6.5 4h6M6.5 6.5h6M6.5 9h6" stroke="#e0e0e0"/><path d="M3.5 15.5v-6H1l4-4.5 4 4.5H6.5v6z" fill="#f4f4f4" stroke="#d0d0d0" stroke-width="0.9"/></svg><svg style="left:601px;top:76px" width="11" height="7" viewBox="0 0 11 7"><path d="M0.5 0.8l5 4.6 5-4.6" fill="none" stroke="#a8a8a8" stroke-width="1.15"/></svg><svg style="left:620px;top:70px" width="18" height="14" viewBox="0 0 18 14"><path d="M17 5.5v4.5H9.5v3.5L3 7.8 9.5 2v3.5z" fill="#fcf0b8" stroke="#c89020" stroke-width="1.2" stroke-linejoin="round"/><path d="M3.5 0.5v5.5M0.8 1.8l5.4 3M6.2 1.8L0.8 4.8" stroke="#2a5a98" stroke-width="1.1"/></svg><svg style="left:648px;top:70px" width="16" height="14" viewBox="0 0 16 14"><path d="M15.3 5.5v4.5H8.5v3.5L1 7.8 8.5 2v3.5z" fill="#fcf0b8" stroke="#c89020" stroke-width="1.2" stroke-linejoin="round"/></svg><svg style="left:673px;top:76px" width="11" height="7" viewBox="0 0 11 7"><path d="M0.5 0.8l5 4.6 5-4.6" fill="none" stroke="#3c3c3c" stroke-width="1.15"/></svg><svg style="left:693px;top:71px" width="16" height="13" viewBox="0 0 16 13"><path d="M0.7 4.5v4.5h6.8v3.5L15 6.8 7.5 1v3.5z" fill="#f6f6f6" stroke="#d0d0d0" stroke-width="1.1" stroke-linejoin="round"/></svg><svg style="left:718px;top:76px" width="11" height="7" viewBox="0 0 11 7"><path d="M0.5 0.8l5 4.6 5-4.6" fill="none" stroke="#a8a8a8" stroke-width="1.15"/></svg><div style="left:739px;top:65px;width:1px;height:26px;background:#c6c6c6"></div><svg style="left:752px;top:71px" width="16" height="14" viewBox="0 0 16 14"><rect x="0.5" y="2.5" width="13" height="11" fill="#dff0fc" stroke="#a08a50"/><rect x="1" y="3" width="10" height="2" fill="#4a8ad0"/><path d="M8 10l4-4" stroke="#303030" stroke-width="1"/><path d="M10 6l3.5-3.5 2 2L12 8z" fill="#30a040" stroke="#1a7a2a" stroke-width="0.6"/></svg><div style="left:780px;top:65px;width:1px;height:26px;background:#c6c6c6"></div><svg style="left:793px;top:70px" width="16" height="16" viewBox="0 0 16 16"><rect x="0.5" y="0.5" width="15" height="15" rx="6" fill="#1a6aae"/><circle cx="8" cy="3.8" r="1.4" fill="#fff"/><path d="M6 6.5h3v6h1.2v1.3H5.8v-1.3H7V7.8H6z" fill="#fff"/></svg><svg style="left:1401px;top:71px" width="16" height="16" viewBox="0 0 16 16"><circle cx="6" cy="6" r="4.6" fill="none" stroke="#606060" stroke-width="1.8"/><path d="M9.5 9.5L14.5 14.5" stroke="#606060" stroke-width="2.2"/></svg><svg style="left:1437px;top:68px" width="3" height="22" viewBox="0 0 3 22"><path d="M1.5 0V22" stroke="#9a9070" stroke-width="1.3" stroke-dasharray="2.5 3"/></svg><svg style="left:1450px;top:70px" width="16" height="16" viewBox="0 0 16 16"><rect x="0.5" y="3.8" width="11.5" height="11" rx="1.2" fill="#eaf6fe" stroke="#8a7040" stroke-width="1"/><rect x="1" y="4.2" width="8" height="2.2" fill="#5a9ad8"/><path d="M1 9.5H11.5M4.5 6.5V14.5" stroke="#8a7040" stroke-width="0.9"/><path d="M10.8 0.8L13.5 3.5 10.8 6.3 8.1 3.5z" fill="none" stroke="#c89a30" stroke-width="2.2" stroke-linejoin="round"/><path d="M10.8 0.8L13.5 3.5 10.8 6.3 8.1 3.5z" fill="#fff4c0" stroke="#fff4c0" stroke-width="0.4"/></svg><div style="left:1478px;top:65px;width:1px;height:26px;background:#c6c6c6"></div><svg style="left:1491px;top:69px" width="17" height="17" viewBox="0 0 17 17"><rect x="0.5" y="0.5" width="12" height="11.5" fill="#eaf6fe" stroke="#8a7040" stroke-width="1"/><rect x="1" y="1" width="11" height="2.2" fill="#2a70c8"/><path d="M1.2 2.1h9.5" stroke="#b8d8f8" stroke-width="0.6"/><path d="M1 8H6M5 3.5V11.5" stroke="#8a7040" stroke-width="0.9"/><rect x="6.5" y="5.5" width="9" height="10.5" fill="#f6faff" stroke="#9a7a30" stroke-width="1.1"/><text x="7.6" y="14.3" font-family="Liberation Serif" font-weight="bold" font-size="10.5" fill="#1a4a90">C</text></svg><div style="left:1513px;top:65px;width:20px;height:26px;background:#d4d4d4;border-radius:5px;border:1px solid #c8c8c8"></div><svg style="left:1518px;top:73px" width="6" height="10" viewBox="0 0 6 10"><path d="M0 3.5h3M2 1.5l2 2-2 2M0 7h3" fill="none" stroke="#20908a" stroke-width="1.1"/></svg>
</body></html>
